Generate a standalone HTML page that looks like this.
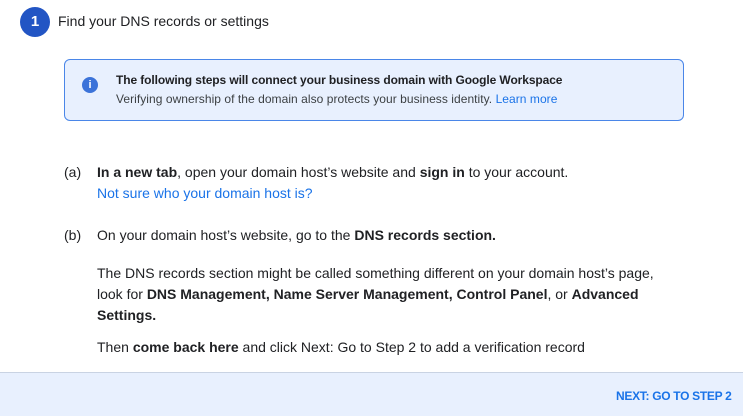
<!DOCTYPE html>
<html><head><style>
body{margin:0;width:743px;height:415px;background:#fff;font-family:"Liberation Sans",sans-serif;color:#202124;position:relative;overflow:hidden;font-size:14px}
.a{position:absolute;white-space:nowrap}
b{font-weight:bold}
.l{color:#1a73e8}
</style></head><body>
<div class="a" style="left:20px;top:7px;width:30px;height:30px;border-radius:50%;background:#2255c4;color:#fff;font-weight:bold;font-size:15px;text-align:center;line-height:30px">1</div>
<div class="a" style="left:58px;top:13px;font-size:14px">Find your DNS records or settings</div>
<div class="a" style="left:64px;top:59px;width:620px;height:62px;box-sizing:border-box;border:1px solid #4a86e8;border-radius:6px;background:#e8f0fe"></div>
<div class="a" style="left:82px;top:77px;width:16px;height:16px;border-radius:50%;background:#3c73d9;color:#fff;font-size:11px;font-weight:bold;text-align:center;line-height:16px">i</div>
<div class="a" style="left:116px;top:73px;font-size:12px;font-weight:bold;letter-spacing:-0.1px">The following steps will connect your business domain with Google Workspace</div>
<div class="a" style="left:116px;top:92px;font-size:12px;color:#3c4043;letter-spacing:0.05px">Verifying ownership of the domain also protects your business identity. <span class="l">Learn more</span></div>
<div class="a" style="left:64px;top:164px">(a)</div>
<div class="a" style="left:97px;top:164px"><b>In a new tab</b>, open your domain host’s website and <b>sign in</b> to your account.</div>
<div class="a l" style="left:97px;top:185px">Not sure who your domain host is?</div>
<div class="a" style="left:64px;top:227px">(b)</div>
<div class="a" style="left:97px;top:227px">On your domain host’s website, go to the <b>DNS records section.</b></div>
<div class="a" style="left:97px;top:263px;line-height:21px">The DNS records section might be called something different on your domain host’s page,<br>look for <b>DNS Management, Name Server Management, Control Panel</b>, or <b>Advanced<br>Settings.</b></div>
<div class="a" style="left:97px;top:339px">Then <b>come back here</b> and click Next: Go to Step 2 to add a verification record</div>
<div class="a" style="left:0;top:372px;width:743px;height:43px;background:#e8f0fe;border-top:1px solid #c9d3e3"></div>
<div class="a l" style="left:616px;top:389px;font-size:12px;font-weight:bold;color:#1a73e8;letter-spacing:-0.3px">NEXT: GO TO STEP 2</div>
</body></html>
